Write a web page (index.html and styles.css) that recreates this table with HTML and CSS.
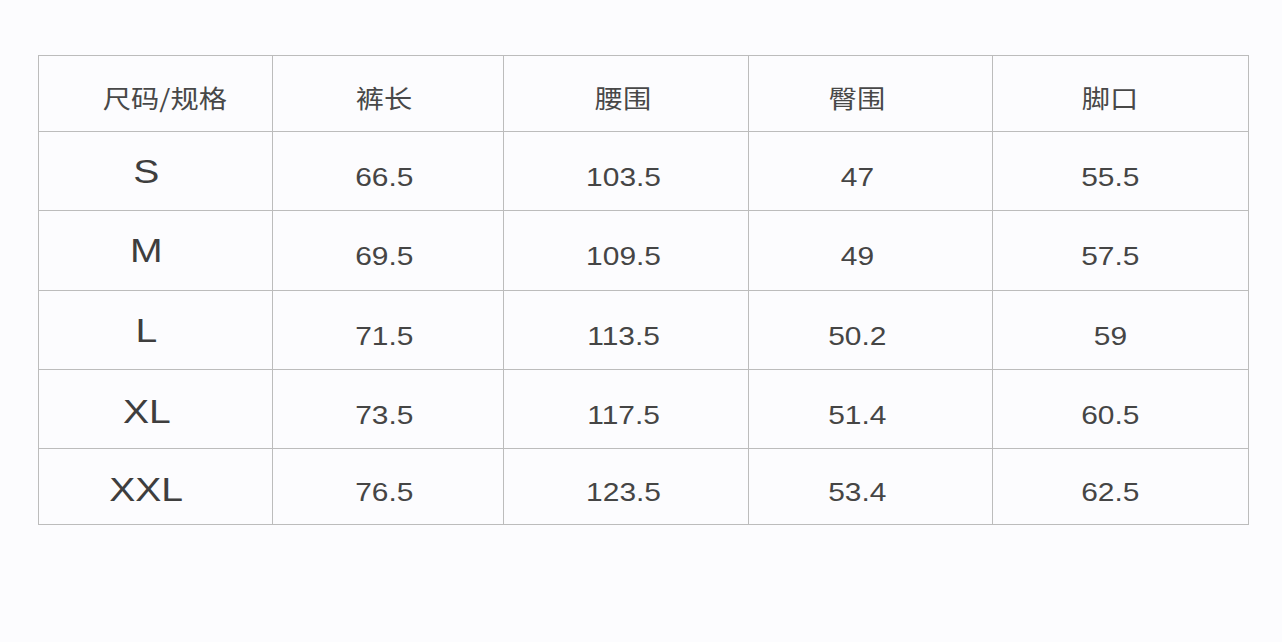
FILE: index.html
```html
<!DOCTYPE html>
<html lang="zh">
<head>
<meta charset="utf-8">
<title>尺码表</title>
<link rel="stylesheet" href="styles.css">
</head>
<body>
<div class="sheet">
  <div class="grid">
    <div class="cell head c1"><span class="t">尺码/规格</span></div>
    <div class="cell head c2"><span class="t">裤长</span></div>
    <div class="cell head c3"><span class="t">腰围</span></div>
    <div class="cell head c4"><span class="t">臀围</span></div>
    <div class="cell head c5"><span class="t">脚口</span></div>

    <div class="cell size c1"><span class="t">S</span></div>
    <div class="cell num c2"><span class="t">66.5</span></div>
    <div class="cell num c3"><span class="t">103.5</span></div>
    <div class="cell num c4"><span class="t">47</span></div>
    <div class="cell num c5"><span class="t">55.5</span></div>

    <div class="cell size c1"><span class="t">M</span></div>
    <div class="cell num c2"><span class="t">69.5</span></div>
    <div class="cell num c3"><span class="t">109.5</span></div>
    <div class="cell num c4"><span class="t">49</span></div>
    <div class="cell num c5"><span class="t">57.5</span></div>

    <div class="cell size c1"><span class="t">L</span></div>
    <div class="cell num c2"><span class="t">71.5</span></div>
    <div class="cell num c3"><span class="t">113.5</span></div>
    <div class="cell num c4"><span class="t">50.2</span></div>
    <div class="cell num c5"><span class="t">59</span></div>

    <div class="cell size c1 low"><span class="t">XL</span></div>
    <div class="cell num c2"><span class="t">73.5</span></div>
    <div class="cell num c3"><span class="t">117.5</span></div>
    <div class="cell num c4"><span class="t">51.4</span></div>
    <div class="cell num c5"><span class="t">60.5</span></div>

    <div class="cell size c1 low"><span class="t">XXL</span></div>
    <div class="cell num c2"><span class="t">76.5</span></div>
    <div class="cell num c3"><span class="t">123.5</span></div>
    <div class="cell num c4"><span class="t">53.4</span></div>
    <div class="cell num c5"><span class="t">62.5</span></div>
  </div>
</div>
</body>
</html>
```

FILE: styles.css
```css
html, body {
  margin: 0;
  padding: 0;
  background: #fcfcfe;
}
body {
  width: 1282px;
  height: 642px;
  overflow: hidden;
  font-family: "Liberation Sans", "Noto Sans CJK SC", sans-serif;
  color: #454545;
}
.sheet {
  padding: 55px 0 0 38px;
}
.grid {
  display: grid;
  grid-template-columns: 233px 230px 244px 243px 255px;
  grid-template-rows: 75px 78px 79px 78px 78px 75px;
  gap: 1px;
  padding: 1px;
  width: max-content;
  background: #bcbcbc;
}
.cell {
  background: #fcfcfe;
  display: flex;
  align-items: center;
  justify-content: center;
  box-sizing: border-box;
}
.t {
  display: inline-block;
  transform: scaleX(1.15);
  white-space: nowrap;
}
.head {
  font-family: "Noto Sans CJK SC", sans-serif;
  font-size: 25px;
  padding-top: 7px;
  color: #484848;
}
.head .t {
  transform: scaleX(1.13);
}
.size {
  font-size: 34px;
  color: #3e3e3e;
}
.size.low {
  padding-top: 5px;
}
.num {
  font-size: 26px;
  padding-top: 12px;
}
.size.c1 { padding-right: 18px; }
.head.c1 { padding-left: 18px; }
.c2 { padding-right: 8px; }
.c3 { padding-right: 5px; }
.c4 { padding-right: 26px; }
.c5 { padding-right: 20px; }
```
